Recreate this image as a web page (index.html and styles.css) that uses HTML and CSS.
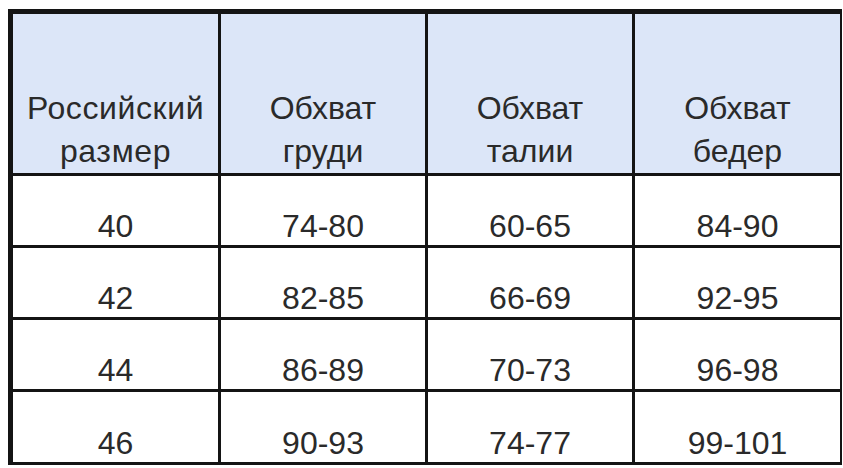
FILE: index.html
```html
<!DOCTYPE html>
<html lang="ru">
<head>
<meta charset="utf-8">
<title>Таблица размеров</title>
<link rel="stylesheet" href="styles.css">
</head>
<body>
<div class="sizes">
  <div class="cell head"><span class="wide">Российский<br>размер</span></div>
  <div class="cell head">Обхват<br>груди</div>
  <div class="cell head">Обхват<br>талии</div>
  <div class="cell head">Обхват<br>бедер</div>

  <div class="cell">40</div>
  <div class="cell">74-80</div>
  <div class="cell">60-65</div>
  <div class="cell">84-90</div>

  <div class="cell">42</div>
  <div class="cell">82-85</div>
  <div class="cell">66-69</div>
  <div class="cell">92-95</div>

  <div class="cell">44</div>
  <div class="cell">86-89</div>
  <div class="cell">70-73</div>
  <div class="cell">96-98</div>

  <div class="cell">46</div>
  <div class="cell">90-93</div>
  <div class="cell">74-77</div>
  <div class="cell">99-101</div>
</div>
</body>
</html>
```

FILE: styles.css
```css
html, body {
  margin: 0;
  background: #ffffff;
}

body {
  padding: 9px 0 0 8px;
  font-family: "Liberation Sans", Arial, sans-serif;
}

.sizes {
  display: grid;
  grid-template-columns: 205px 204px 204px 205px;
  grid-template-rows: 159px 69px 69px 69px 70px;
  gap: 3px;
  padding: 5px 2px 3px 5px;
  width: 827px;
  background: #141414;
}

.cell {
  display: flex;
  align-items: flex-end;
  justify-content: center;
  text-align: center;
  background: #ffffff;
  color: #2a2a2a;
  font-size: 32px;
  line-height: 37px;
}

.head {
  background: #dce6f8;
  line-height: 43px;
}

.wide {
  letter-spacing: 0.6px;
}
```
